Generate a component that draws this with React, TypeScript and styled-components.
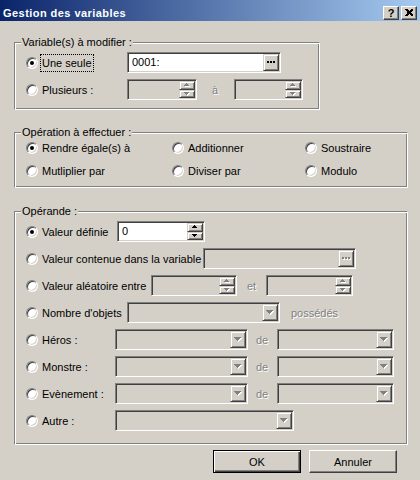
import React from 'react'
import styled, { createGlobalStyle, css } from 'styled-components'

const FACE = '#d4d0c8'
const SHADOW = '#808080'
const DARK = '#404040'

const GlobalStyle = createGlobalStyle`
  html, body { margin: 0; padding: 0; background: ${FACE}; }
  body { font-family: "Liberation Sans", Arial, sans-serif; font-size: 11px; color: #000; }
`

const raisedSmall = css`
  box-sizing: border-box;
  background: ${FACE};
  border: 1px solid;
  border-color: ${FACE} ${DARK} ${DARK} ${FACE};
  box-shadow: inset 1px 1px #fff, inset -1px -1px ${SHADOW};
`

const Window = styled.div`
  width: 420px;
  height: 480px;
  background: ${FACE};
  overflow: hidden;
  display: flex;
  flex-direction: column;
`

const TitleBar = styled.div`
  height: 21px;
  box-sizing: border-box;
  padding: 4px 3px 0 3px;
  display: flex;
  align-items: center;
  background: linear-gradient(to right, #0a246a, #a6caf0);
`

const Title = styled.div`
  flex: 1;
  color: #fff;
  font-weight: bold;
  font-size: 11px;
  letter-spacing: 0.45px;
`

const CaptionButtons = styled.div`
  display: flex;
  gap: 2px;
`

const CaptionButton = styled.div`
  ${raisedSmall};
  border-color: #fff ${DARK} ${DARK} #fff;
  box-shadow: inset -1px -1px ${SHADOW};
  width: 16px;
  height: 14px;
  display: flex;
  align-items: center;
  justify-content: center;
  font-weight: bold;
  font-size: 11px;
  line-height: 12px;
`

const Content = styled.div`
  display: flex;
  flex-direction: column;
  padding: 0 12px 0 14px;
`

const Group = styled.fieldset<{ $w?: number; $top: number; $pad: string }>`
  margin: ${p => p.$top}px 0 0 0;
  width: ${p => (p.$w ? `${p.$w}px` : 'auto')};
  box-sizing: border-box;
  min-inline-size: 0;
  border: 1px solid;
  border-color: ${SHADOW} #fff #fff ${SHADOW};
  box-shadow: inset 1px 1px #fff, inset -1px -1px ${SHADOW};
  padding: ${p => p.$pad};
`

const Legend = styled.legend`
  margin-left: -5px;
  padding: 0 1px;
  line-height: 13px;
  background: ${FACE};
`

const Rows = styled.div<{ $gap: number }>`
  display: flex;
  flex-direction: column;
  gap: ${p => p.$gap}px;
`

const Row = styled.div`
  display: flex;
  align-items: center;
  height: 21px;
`

const OpGrid = styled.div`
  display: grid;
  grid-template-columns: 146px 133px 1fr;
  grid-auto-rows: 17px;
  row-gap: 6px;
`

const Option = styled.label<{ $w?: number }>`
  flex: none;
  width: ${p => (p.$w ? `${p.$w}px` : 'auto')};
  display: flex;
  align-items: center;
  white-space: nowrap;
`

const RadioDot = styled.span<{ $on?: boolean }>`
  flex: none;
  width: 12px;
  height: 12px;
  box-sizing: border-box;
  border-radius: 50%;
  border: 1px solid;
  border-color: ${SHADOW} #fff #fff ${SHADOW};
  box-shadow: inset 1px 1px ${DARK}, inset -1px -1px ${FACE};
  background: #fff;
  display: flex;
  align-items: center;
  justify-content: center;
  &::after {
    content: '';
    width: 4px;
    height: 4px;
    border-radius: 50%;
    background: #000;
    display: ${p => (p.$on ? 'block' : 'none')};
  }
`

const Caption = styled.span<{ $focus?: boolean }>`
  margin-left: 3px;
  padding: 1px 1px;
  line-height: 14px;
  outline: ${p => (p.$focus ? '1px dotted #000' : 'none')};
`

const Field = styled.div<{ $w: number; $off?: boolean }>`
  flex: none;
  width: ${p => p.$w}px;
  height: 21px;
  box-sizing: border-box;
  border: 1px solid;
  border-color: ${SHADOW} #fff #fff ${SHADOW};
  box-shadow: inset 1px 1px ${DARK}, inset -1px -1px ${FACE};
  padding: 1px;
  background: ${p => (p.$off ? FACE : '#fff')};
  display: flex;
  align-items: stretch;
`

const FieldText = styled.div`
  flex: 1;
  padding-left: 3px;
  line-height: 17px;
  white-space: nowrap;
  overflow: hidden;
`

const SpinCol = styled.div`
  flex: none;
  width: 16px;
  display: flex;
  flex-direction: column;
`

const SmallBtn = styled.div<{ $w?: number }>`
  ${raisedSmall};
  flex: 1;
  width: ${p => (p.$w ? `${p.$w}px` : 'auto')};
  display: flex;
  align-items: center;
  justify-content: center;
`

const Joiner = styled.span<{ $w?: number; $pl: number }>`
  flex: none;
  width: ${p => (p.$w ? `${p.$w}px` : 'auto')};
  box-sizing: border-box;
  padding-left: ${p => p.$pl}px;
  color: ${SHADOW};
  text-shadow: 1px 1px #fff;
  white-space: nowrap;
`

const Footer = styled.div`
  display: flex;
  justify-content: flex-end;
  gap: 8px;
  margin-top: 5px;
  padding-right: 11px;
`

const PushButton = styled.button<{ $default?: boolean }>`
  width: 88px;
  height: 23px;
  box-sizing: border-box;
  margin: 0;
  padding: 0;
  font: inherit;
  color: #000;
  background: ${FACE};
  border: 1px solid;
  border-color: #fff ${DARK} ${DARK} #fff;
  box-shadow: inset -1px -1px ${SHADOW};
  ${p =>
    p.$default &&
    css`
      border-color: #000;
      box-shadow: inset 1px 1px #fff, inset -1px -1px ${DARK}, inset -2px -2px ${SHADOW};
    `}
`

function Tri({ w, up, off }: { w: number; up?: boolean; off?: boolean }) {
  const n = Math.ceil(w / 2)
  const shape = (dx: number, fill: string) =>
    Array.from({ length: n }, (_, i) => (
      <rect
        key={`${fill}${i}`}
        x={i + dx}
        y={(up ? n - 1 - i : i) + dx}
        width={w - 2 * i}
        height={1}
        fill={fill}
      />
    ))
  return (
    <svg width={w + 1} height={n + 1} shapeRendering="crispEdges" style={{ display: 'block' }}>
      {off && shape(1, '#fff')}
      {shape(0, off ? SHADOW : '#000')}
    </svg>
  )
}

function Dots({ off }: { off?: boolean }) {
  const shape = (dx: number, fill: string) =>
    [0, 3, 6].map(x => <rect key={`${fill}${x}`} x={x + dx} y={dx} width={2} height={2} fill={fill} />)
  return (
    <svg width={9} height={3} shapeRendering="crispEdges" style={{ display: 'block' }}>
      {off && shape(1, '#fff')}
      {shape(0, off ? SHADOW : '#000')}
    </svg>
  )
}

function Radio({ w, on, focus, children }: { w?: number; on?: boolean; focus?: boolean; children: React.ReactNode }) {
  return (
    <Option $w={w}>
      <RadioDot $on={on} />
      <Caption $focus={focus}>{children}</Caption>
    </Option>
  )
}

function Spin({ w, value, off }: { w: number; value?: string; off?: boolean }) {
  return (
    <Field $w={w} $off={off}>
      <FieldText>{value}</FieldText>
      <SpinCol>
        <SmallBtn>
          <Tri w={5} up off={off} />
        </SmallBtn>
        <SmallBtn>
          <Tri w={5} off={off} />
        </SmallBtn>
      </SpinCol>
    </Field>
  )
}

function Browse({ w, value, off }: { w: number; value?: string; off?: boolean }) {
  return (
    <Field $w={w} $off={off}>
      <FieldText>{value}</FieldText>
      <SmallBtn $w={16} style={{ flex: 'none' }}>
        <Dots off={off} />
      </SmallBtn>
    </Field>
  )
}

function Combo({ w }: { w: number }) {
  return (
    <Field $w={w} $off>
      <FieldText />
      <SmallBtn $w={16} style={{ flex: 'none' }}>
        <Tri w={7} off />
      </SmallBtn>
    </Field>
  )
}

export default function App() {
  return (
    <Window>
      <GlobalStyle />
      <TitleBar>
        <Title>Gestion des variables</Title>
        <CaptionButtons>
          <CaptionButton>?</CaptionButton>
          <CaptionButton>
            <svg width="8" height="7" shapeRendering="crispEdges">
              <path d="M0 0h2l2 2 2-2h2v1l-2 2v1l2 2v1h-2l-2-2-2 2h-2v-1l2-2v-1l-2-2z" fill="#000" />
            </svg>
          </CaptionButton>
        </CaptionButtons>
      </TitleBar>

      <Content>
        <Group $w={306} $top={15} $pad="3px 0 9px 11px">
          <Legend>Variable(s) à modifier :</Legend>
          <Rows $gap={6}>
            <Row>
              <Radio w={101} on focus>
                Une seule
              </Radio>
              <Browse w={154} value="0001:" />
            </Row>
            <Row>
              <Radio w={101}>Plusieurs :</Radio>
              <Spin w={70} off />
              <Joiner $w={37} $pl={15}>
                à
              </Joiner>
              <Spin w={69} off />
            </Row>
          </Rows>
        </Group>

        <Group $top={16} $pad="0 0 8px 11px">
          <Legend>Opération à effectuer :</Legend>
          <OpGrid>
            <Radio on>Rendre égale(s) à</Radio>
            <Radio>Additionner</Radio>
            <Radio>Soustraire</Radio>
            <Radio>Mutliplier par</Radio>
            <Radio>Diviser par</Radio>
            <Radio>Modulo</Radio>
          </OpGrid>
        </Group>

        <Group $top={17} $pad="3px 0 13px 11px">
          <Legend>Opérande :</Legend>
          <Rows $gap={6}>
            <Row>
              <Radio w={91} on>
                Valeur définie
              </Radio>
              <Spin w={88} value="0" />
            </Row>
            <Row>
              <Radio w={177}>Valeur contenue dans la variable</Radio>
              <Browse w={153} off />
            </Row>
            <Row>
              <Radio w={125}>Valeur aléatoire entre</Radio>
              <Spin w={86} off />
              <Joiner $w={29} $pl={10}>
                et
              </Joiner>
              <Spin w={87} off />
            </Row>
            <Row>
              <Radio w={101}>Nombre d'objets</Radio>
              <Combo w={153} />
              <Joiner $pl={11}>possédés</Joiner>
            </Row>
            {['Héros :', 'Monstre :', 'Evènement :'].map(label => (
              <Row key={label}>
                <Radio w={89}>{label}</Radio>
                <Combo w={133} />
                <Joiner $w={29} $pl={8}>
                  de
                </Joiner>
                <Combo w={117} />
              </Row>
            ))}
            <Row>
              <Radio w={89}>Autre :</Radio>
              <Combo w={179} />
            </Row>
          </Rows>
        </Group>

        <Footer>
          <PushButton $default>OK</PushButton>
          <PushButton>Annuler</PushButton>
        </Footer>
      </Content>
    </Window>
  )
}
